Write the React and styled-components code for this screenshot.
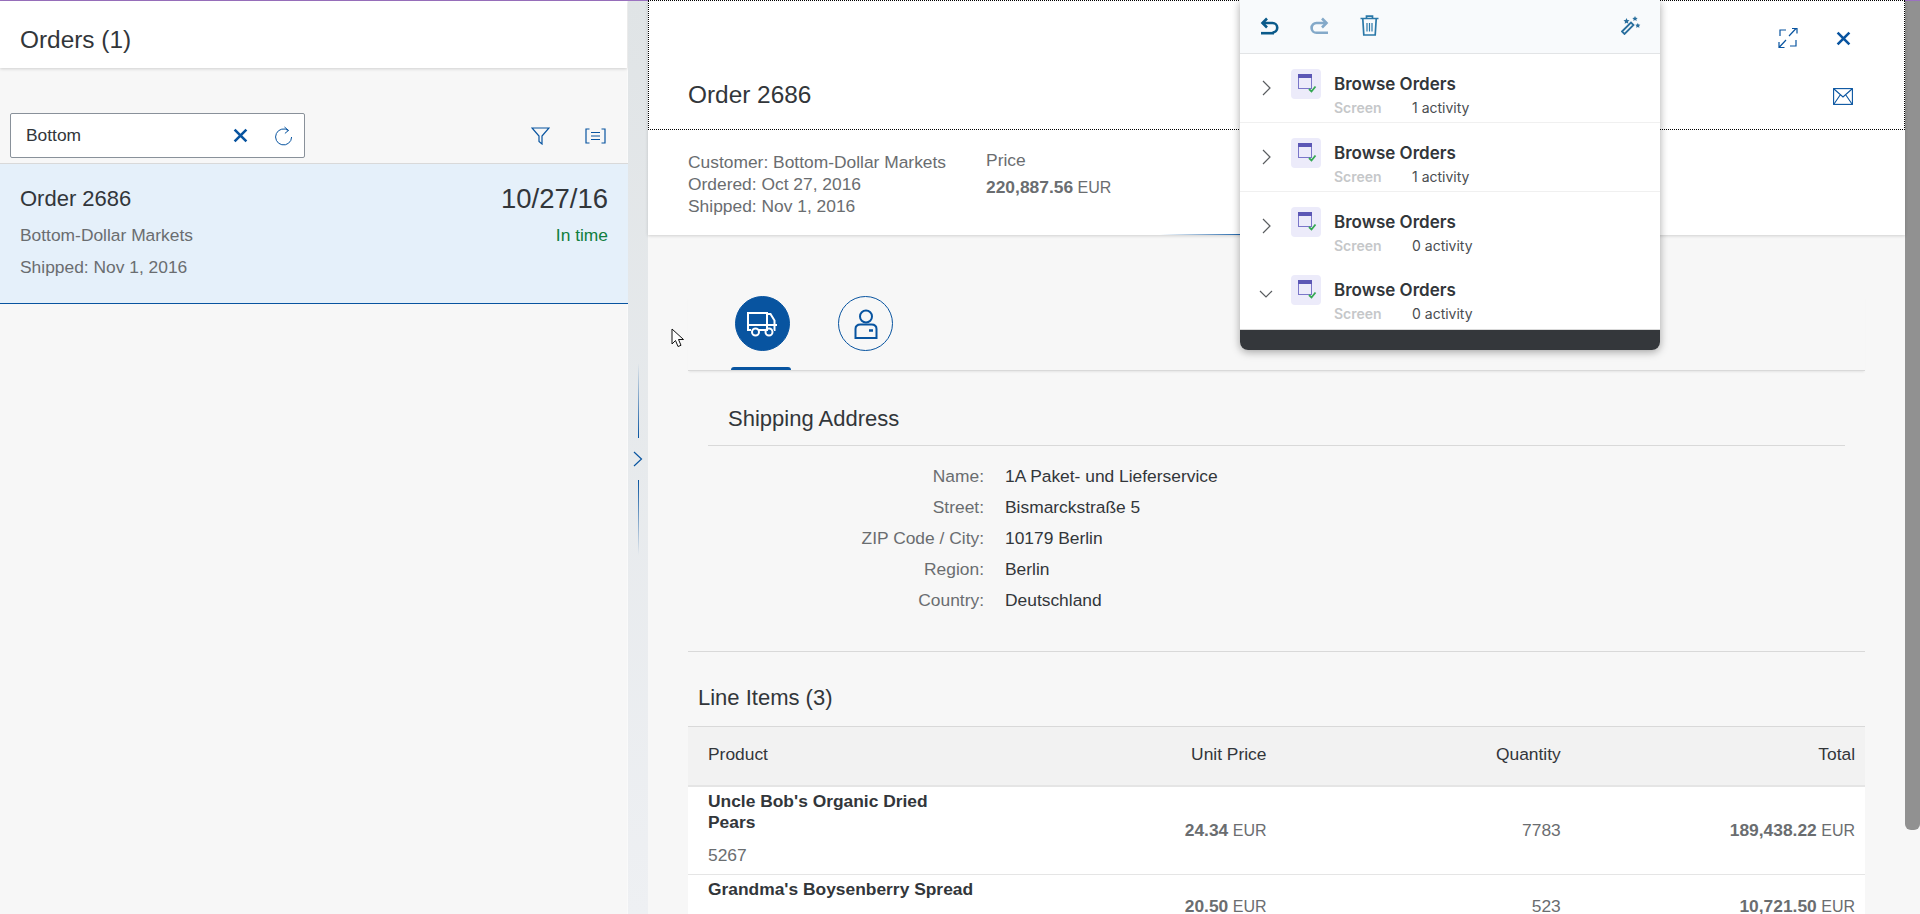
import { Fragment } from 'react';
import styled, { createGlobalStyle } from 'styled-components';

const GlobalStyle = createGlobalStyle`
	html, body {
		margin: 0;
		height: 100%;
		overflow: hidden;
		background: #f7f7f7;
	}
	* { box-sizing: border-box; }
	body {
		font-family: "Liberation Sans", Arial, sans-serif;
		font-size: 17.4px;
		color: #32363a;
	}
`

const Page = styled.div`
	position: relative;
	width: 1920px;
	height: 914px;
	overflow: hidden;
	display: flex;
	flex-direction: column;
`
const TopLine = styled.div`
	height: 1px;
	flex: none;
	background: #9b72c0;
`
const Main = styled.div`
	flex: 1;
	min-height: 0;
	display: flex;
`

/* left list */
const MasterPanel = styled.section`
	width: 628px;
	flex: none;
	background: #f7f7f7;
	border-right: 1px solid #fafafa;
`
const MasterHeader = styled.header`
	height: 67px;
	background: #fff;
	padding: 10px 0 0 20px;
	display: flex;
	align-items: center;
	font-size: 24.4px;
	box-shadow: 0 1px 3px rgba(0, 0, 0, .16);
`
const SearchRow = styled.div`
	display: flex;
	align-items: center;
	height: 95px;
	padding: 46px 0 6px 10px;
`
const SearchBox = styled.div`
	width: 295px;
	height: 45px;
	background: #fff;
	border: 1px solid #89919a;
	border-radius: 2px;
	display: flex;
	align-items: center;
	padding-left: 15px;
	color: #32363a;
`
const SearchText = styled.span`
	flex: 1;
`
const SearchIcon = styled.span`
	display: flex;
	justify-content: center;
	width: 42px;
	margin-right: ${p => p.$end ? '0' : '1px'};
`
const ToolIcons = styled.div`
	margin-left: auto;
	display: flex;
	align-items: center;
	gap: 35px;
	padding-right: 21px;
`
const OrderItem = styled.div`
	height: 141px;
	background: #e5f0fa;
	border-top: 1px solid #d9d9d9;
	border-bottom: 1px solid #0854a0;
	padding: 15px 20px 0;
	display: grid;
	grid-template-columns: 1fr auto;
	grid-template-rows: 40px 32px 32px;
	align-items: center;
	margin-right: -1px;
`
const ItemTitle = styled.div`
	font-size: 22px;
`
const ItemDate = styled.div`
	font-size: 27.5px;
	text-align: right;
`
const ItemMuted = styled.div`
	color: #6a6d70;
`
const ItemStatus = styled.div`
	color: #107e3e;
	text-align: right;
`

/* splitter */
const Splitter = styled.div`
	width: 20px;
	flex: none;
	background: linear-gradient(#e0e4e6, #eef0f3);
	display: flex;
	flex-direction: column;
	align-items: center;
	padding-top: 362px;
`
const GripLine = styled.div`
	width: 1px;
	height: 75px;
	background: linear-gradient(${p => p.$down ? '#0854a0, transparent' : 'transparent, #0854a0'});
`
const GripArrow = styled.div`
	height: 42px;
	display: flex;
	align-items: center;
`

/* right detail */
const DetailPanel = styled.section`
	flex: 1;
	min-width: 0;
	background: #f7f7f7;
`
const ObjectHeader = styled.header`
	position: relative;
	background: #fff;
	height: 235px;
	box-shadow: 0 1px 3px rgba(0, 0, 0, .16);
	&::after {
		content: '';
		position: absolute;
		left: 512px;
		bottom: 0;
		width: 300px;
		height: 1px;
		background: linear-gradient(90deg, transparent, #0854a0 30%);
	}
`
const TitleBar = styled.div`
	height: 130px;
	border: 1px dotted #000;
	margin-top: -1px;
	padding: 0 39px;
	display: flex;
	align-items: flex-end;
	justify-content: space-between;
`
const OrderTitle = styled.h1`
	margin: 0 0 20px;
	font-size: 24.4px;
	font-weight: 400;
`
const HeaderActions = styled.div`
	align-self: stretch;
	display: flex;
	flex-direction: column;
	align-items: flex-end;
	gap: 38px;
	padding-top: 27px;
	margin-right: 14px;
`
const ActionRow = styled.div`
	display: flex;
	align-items: center;
	gap: 38px;
	height: 20px;
`
const MailRow = styled(ActionRow)`
	margin-right: -2px;
`
const Summary = styled.div`
	display: flex;
	gap: 40px;
	padding: 21px 40px 0;
	color: #6a6d70;
	line-height: 22px;
`
const PriceLabel = styled.div`
	margin-top: -2px;
	margin-bottom: 5px;
`
const Money = styled.span`
	color: #6a6d70;
	font-size: 16px;
	b {
		font-size: 17.4px;
		font-weight: 700;
	}
`

const Content = styled.div`
	padding: 0 40px;
`
const TabBar = styled.div`
	margin-top: 61px;
	height: 75px;
	display: flex;
	align-items: flex-start;
	gap: 43px;
	padding-left: 43px;
	border-bottom: 1px solid #d9d9d9;
	box-shadow: 0 2px 2px -1px rgba(0, 0, 0, .08);
`
const Tab = styled.div`
	width: 60px;
	height: 74px;
	padding-left: 4px;
	position: relative;
	&::after {
		content: '';
		display: ${p => p.$active ? 'block' : 'none'};
		position: absolute;
		left: 0;
		right: 0;
		bottom: 0;
		height: 3px;
		border-radius: 3px 3px 0 0;
		background: #0854a0;
	}
`
const TabCircle = styled.div`
	width: 55px;
	height: 55px;
	border-radius: 50%;
	border: 1px solid #0854a0;
	background: ${p => p.$active ? '#0854a0' : 'transparent'};
	display: flex;
	align-items: center;
	justify-content: center;
`
const AddressSection = styled.div`
	padding: 0 20px;
	height: 281px;
	border-bottom: 1px solid #d9d9d9;
`
const SectionTitle = styled.h2`
	margin: 0;
	padding: 22px 0 0 20px;
	height: 75px;
	display: flex;
	align-items: center;
	font-size: 22px;
	font-weight: 400;
	border-bottom: 1px solid #d9d9d9;
`
const AddressForm = styled.div`
	display: grid;
	grid-template-columns: 276px 1fr;
	column-gap: 21px;
	grid-auto-rows: 31px;
	align-items: center;
	padding-top: 15px;
`
const FormLabel = styled.div`
	color: #6a6d70;
	text-align: right;
`
const LineTitle = styled.h2`
	margin: 0;
	padding: 17px 0 0 10px;
	height: 74px;
	display: flex;
	align-items: center;
	font-size: 22px;
	font-weight: 400;
`
const TableRow = styled.div`
	display: grid;
	grid-template-columns: repeat(4, 1fr);
	align-items: center;
	background: ${p => p.$head ? '#f2f2f2' : '#fff'};
	height: ${p => p.$h}px;
	border-top: ${p => p.$head ? '1px solid #d9d9d9' : 'none'};
	border-bottom: ${p => p.$head ? '2px solid #e5e5e5' : '1px solid #e5e5e5'};
`
const Cell = styled.div`
	padding: 0 10px;
	text-align: right;
	color: #6a6d70;
	&:first-child {
		padding-left: 20px;
		padding-right: 0;
		text-align: left;
	}
`
const HeadCell = styled(Cell)`
	color: #32363a;
	padding-bottom: 4px;
`
const ProductCell = styled(Cell)`
	align-self: start;
	padding-top: 4px;
`
const ProductName = styled.div`
	max-width: 268px;
	font-weight: 700;
	color: #32363a;
	line-height: 21px;
	margin-bottom: 11px;
`
const ProductCode = styled.div`
	line-height: 22px;
`

/* floating change log */
const Popup = styled.aside`
	position: absolute;
	top: 0;
	left: 1240px;
	width: 420px;
	height: 350px;
	display: flex;
	flex-direction: column;
	background: #fff;
	border-radius: 0 0 8px 8px;
	box-shadow: 0 2px 8px rgba(0, 0, 0, .35);
	font-family: Inter, "Liberation Sans", sans-serif;
	overflow: hidden;
`
const PopupBar = styled.div`
	height: 54px;
	flex: none;
	display: flex;
	align-items: center;
	gap: 31px;
	padding: 0 19px 2px 20px;
	background: #f8fafc;
	border-bottom: 1px solid #e2e4e6;
`
const WandSlot = styled.div`
	margin-left: auto;
	display: flex;
`
const LogRow = styled.div`
	height: ${p => p.$h}px;
	flex: none;
	display: flex;
	align-items: flex-start;
	padding-top: 15px;
	border-bottom: ${p => p.$line ? '1px solid #f0f0f0' : 'none'};
`
const Chevron = styled.div`
	width: 51px;
	flex: none;
	display: flex;
	justify-content: center;
	padding-top: 11px;
`
const ScreenBadge = styled.div`
	width: 30px;
	height: 30px;
	flex: none;
	border-radius: 4px;
	background: #ecebfa;
	display: flex;
	align-items: center;
	justify-content: center;
`
const LogText = styled.div`
	margin: 5px 0 0 13px;
`
const LogTitle = styled.div`
	font-size: 17px;
	font-weight: 600;
	line-height: 20px;
	color: #32363a;
`
const LogMeta = styled.div`
	display: flex;
	font-size: 14px;
	line-height: 18px;
	margin-top: 5px;
	color: #4a4d50;
`
const LogKind = styled.span`
	width: 78px;
	font-weight: 600;
	color: #c5c7c9;
`
const PopupFoot = styled.div`
	margin-top: auto;
	height: 21px;
	flex: none;
	background: #34373b;
	border-top: 1px solid #d9d9d9;
`

const Scrollbar = styled.div`
	width: 15px;
	flex: none;
	background: #f7f7f7;
`
const ScrollThumb = styled.div`
	height: 829px;
	background: #919191;
	border-radius: 0 0 6px 6px;
`
const Cursor = styled.svg`
	position: absolute;
	left: 671px;
	top: 328px;
`

const BLUE = '#0854a0';

const CloseIcon = ({ size = 15 }) => (
	<svg width={size} height={size} viewBox="0 0 14 14" fill="none" stroke={BLUE} strokeWidth="2.4">
		<path d="M1.500 1.500l11 11M12.500 1.500l-11 11" />
	</svg>
);
const RefreshIcon = () => (
	<svg width="19" height="20" viewBox="0 0 19 20" fill="none" stroke={BLUE} strokeWidth="1">
		<path d="M14.500 4.600A8 8 0 1 0 17.600 11" />
		<path d="M10.500 1l4 3.400-3.600 3" />
	</svg>
);
const FilterIcon = () => (
	<svg width="19" height="18" viewBox="0 0 19 18" fill="none" stroke={BLUE} strokeWidth="1.2">
		<path d="M1 1h17l-7 8v8l-3-2.500V9z" />
	</svg>
);
const ListIcon = () => (
	<svg width="21" height="16" viewBox="0 0 21 16" fill="none" stroke={BLUE} strokeWidth="1.2">
		<path d="M4.500 1H1v14h3.500M16.500 1H20v14h-3.500M6 4.500h9M6 8h9M6 11.500h9" />
	</svg>
);
const ExpandIcon = () => (
	<svg width="20" height="22" viewBox="0 0 20 22" fill="none" stroke={BLUE} strokeWidth="1.2">
		<path d="M2 9V3h6M18 13v6h-6M11 9l7-7.500M14 1.500h5v5M8 13l-7 7.500M1 15v5.500h5.500" />
	</svg>
);
const MailIcon = () => (
	<svg width="20" height="17" viewBox="0 0 20 17" fill="none" stroke={BLUE} strokeWidth="1.1">
		<rect x=".6" y=".6" width="18.800" height="15.800" />
		<path d="M1 1l9 8 9-8M1 16l6.500-9.500M19 16l-6.500-9.500" />
	</svg>
);
const TruckIcon = () => (
	<svg width="31" height="26" viewBox="0 0 31 26" fill="none" stroke="#fff" strokeWidth="2">
		<path d="M4 19H1V2h19v17H11M20 3h3.500l4 6.500V19h-.5" />
		<path d="M1 14h29" />
		<circle cx="8.500" cy="21" r="3.500" />
		<circle cx="22" cy="21" r="3.500" />
		<path d="M15 19h3.500" />
	</svg>
);
const PersonIcon = () => (
	<svg width="24" height="30" viewBox="0 0 24 30" fill="none" stroke={BLUE} strokeWidth="2">
		<circle cx="12" cy="7.500" r="6" />
		<path d="M1.500 29V20c0-3 2-4.500 5-4.500h11c3 0 5 1.500 5 4.500v9z" />
		<path d="M15 21.500h4" strokeWidth="2.500" />
	</svg>
);
const GripChevron = () => (
	<svg width="10" height="16" viewBox="0 0 10 16" fill="none" stroke={BLUE} strokeWidth="1.2">
		<path d="M1 1l7.500 7L1 15" />
	</svg>
);
const UndoIcon = ({ color }) => (
	<svg width="19" height="18" viewBox="0 0 19 18" fill="none" stroke={color} strokeWidth="2.6">
		<path d="M7 1.500L2.500 6 7 10.500" />
		<path d="M2.500 6h10a4.500 4.500 0 0 1 0 9.500" />
		<path d="M1 16.200h13" />
	</svg>
);
const RedoIcon = ({ color }) => (
	<svg width="19" height="18" viewBox="0 0 19 18" fill="none" stroke={color} strokeWidth="2.6">
		<path d="M12 1.500L16.500 6 12 10.500" />
		<path d="M16.500 6H6.500a4.500 4.500 0 0 0 0 9.800H18" />
	</svg>
);
const TrashIcon = ({ color }) => (
	<svg width="19" height="21" viewBox="0 0 19 21" fill="none" stroke={color} strokeWidth="1.7">
		<path d="M.5 3.500h18M6.500 3V1.200h6V3M2.800 4l1 16h11.400l1-16" />
		<path d="M7 8v8.500M9.500 8v8.500M12 8v8.500" strokeWidth="1.200" />
	</svg>
);
const WandIcon = ({ color }) => (
	<svg width="20" height="19" viewBox="0 0 20 19" fill={color}>
		<path d="M1 15.500L10 6.500l2.500 2.500-9 9z" fill="none" stroke={color} strokeWidth="1.800" />
		<path d="M5.500 2l.9 2.100 2.100.2-1.600 1.400.5 2.100-1.900-1.100-1.900 1.100.5-2.100-1.600-1.400 2.100-.2zM14 0l.8 1.700 1.900.2-1.400 1.300.4 1.800-1.700-.9-1.700.9.400-1.800L11.300 1.900l1.900-.2zM16.800 7l.8 1.600 1.700.2-1.200 1.200.3 1.800-1.600-.9-1.600.9.3-1.800-1.200-1.200 1.700-.2z" />
	</svg>
);
const ScreenIcon = () => (
	<svg width="22" height="22" viewBox="0 0 22 22" fill="none">
		<rect x="3.500" y="1.500" width="13" height="14" stroke="#7a76c9" />
		<rect x="3" y="1" width="14" height="4" fill="#5b57b5" />
		<path d="M14 16l2.500 2.500 4-5" stroke="#34a853" strokeWidth="1.800" />
	</svg>
);
const RowChevron = ({ open }) => (
	<svg width="14" height="16" viewBox="0 0 14 16" fill="none" stroke="#5a5d60" strokeWidth="1.200">
		<path d={open ? 'M1 5l6 6 6-6' : 'M4 1l7 7-7 7'} />
	</svg>
);

const ADDRESS = [
	['Name:', '1A Paket- und Lieferservice'],
	['Street:', 'Bismarckstraße 5'],
	['ZIP Code / City:', '10179 Berlin'],
	['Region:', 'Berlin'],
	['Country:', 'Deutschland'],
];
const LOG = [
	{ h: 69, line: true, count: '1 activity' },
	{ h: 69, line: true, count: '1 activity' },
	{ h: 68, count: '0 activity' },
	{ h: 68, open: true, count: '0 activity' },
];

const App = () => {
	return (
		<Page>
			<GlobalStyle />
			<TopLine />
			<Main>
				<MasterPanel>
					<MasterHeader>Orders (1)</MasterHeader>
					<SearchRow>
						<SearchBox>
							<SearchText>Bottom</SearchText>
							<SearchIcon><CloseIcon /></SearchIcon>
							<SearchIcon $end><RefreshIcon /></SearchIcon>
						</SearchBox>
						<ToolIcons>
							<FilterIcon />
							<ListIcon />
						</ToolIcons>
					</SearchRow>
					<OrderItem>
						<ItemTitle>Order 2686</ItemTitle>
						<ItemDate>10/27/16</ItemDate>
						<ItemMuted>Bottom-Dollar Markets</ItemMuted>
						<ItemStatus>In time</ItemStatus>
						<ItemMuted>Shipped: Nov 1, 2016</ItemMuted>
					</OrderItem>
				</MasterPanel>
				<Splitter>
					<GripLine />
					<GripArrow><GripChevron /></GripArrow>
					<GripLine $down />
				</Splitter>
				<DetailPanel>
					<ObjectHeader>
						<TitleBar>
							<OrderTitle>Order 2686</OrderTitle>
							<HeaderActions>
								<ActionRow><ExpandIcon /><CloseIcon /></ActionRow>
								<MailRow><MailIcon /></MailRow>
							</HeaderActions>
						</TitleBar>
						<Summary>
							<div>
								<div>Customer: Bottom-Dollar Markets</div>
								<div>Ordered: Oct 27, 2016</div>
								<div>Shipped: Nov 1, 2016</div>
							</div>
							<div>
								<PriceLabel>Price</PriceLabel>
								<Money><b>220,887.56</b> EUR</Money>
							</div>
						</Summary>
					</ObjectHeader>
					<Content>
						<TabBar>
							<Tab $active><TabCircle $active><TruckIcon /></TabCircle></Tab>
							<Tab><TabCircle><PersonIcon /></TabCircle></Tab>
						</TabBar>
						<AddressSection>
							<SectionTitle>Shipping Address</SectionTitle>
							<AddressForm>
								{ADDRESS.map(([label, value]) => (
									<Fragment key={label}>
										<FormLabel>{label}</FormLabel>
										<div>{value}</div>
									</Fragment>
								))}
							</AddressForm>
						</AddressSection>
						<LineTitle>Line Items (3)</LineTitle>
						<TableRow $head $h={61}>
							<HeadCell>Product</HeadCell>
							<HeadCell>Unit Price</HeadCell>
							<HeadCell>Quantity</HeadCell>
							<HeadCell>Total</HeadCell>
						</TableRow>
						<TableRow $h={88}>
							<ProductCell>
								<ProductName>Uncle Bob's Organic Dried Pears</ProductName>
								<ProductCode>5267</ProductCode>
							</ProductCell>
							<Cell><Money><b>24.34</b> EUR</Money></Cell>
							<Cell>7783</Cell>
							<Cell><Money><b>189,438.22</b> EUR</Money></Cell>
						</TableRow>
						<TableRow $h={64}>
							<ProductCell>
								<ProductName>Grandma's Boysenberry Spread</ProductName>
							</ProductCell>
							<Cell><Money><b>20.50</b> EUR</Money></Cell>
							<Cell>523</Cell>
							<Cell><Money><b>10,721.50</b> EUR</Money></Cell>
						</TableRow>
					</Content>
				</DetailPanel>
				<Scrollbar><ScrollThumb /></Scrollbar>
			</Main>
			<Popup>
				<PopupBar>
					<UndoIcon color="#0b5a8a" />
					<RedoIcon color="#84a9c9" />
					<TrashIcon color="#2a78a8" />
					<WandSlot><WandIcon color="#2a6f9e" /></WandSlot>
				</PopupBar>
				{LOG.map((row, i) => (
					<LogRow key={i} $h={row.h} $line={row.line}>
						<Chevron><RowChevron open={row.open} /></Chevron>
						<ScreenBadge><ScreenIcon /></ScreenBadge>
						<LogText>
							<LogTitle>Browse Orders</LogTitle>
							<LogMeta>
								<LogKind>Screen</LogKind>
								<span>{row.count}</span>
							</LogMeta>
						</LogText>
					</LogRow>
				))}
				<PopupFoot />
			</Popup>
			<Cursor width="14" height="20" viewBox="0 0 14 20">
				<path d="M1 1v15l3.500-3.500 2.500 6 3-1.200-2.500-5.800H12.500z" fill="#fff" stroke="#111" strokeWidth="1" />
			</Cursor>
		</Page>
	)
}

export default App
